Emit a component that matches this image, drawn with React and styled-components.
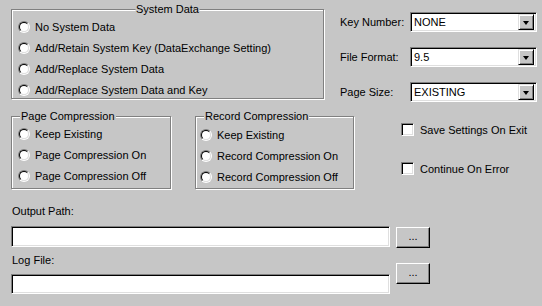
import styled, { createGlobalStyle } from "styled-components"

const Global = createGlobalStyle`
  html, body { margin: 0; padding: 0; background: #c6c6c6; }
  * { box-sizing: border-box; }
`

const Window = styled.div`
  width: 542px;
  height: 306px;
  background: #c6c6c6;
  font-family: "Liberation Sans", Arial, sans-serif;
  font-size: 11px;
  color: #000;
  padding: 9px 0 0 11px;
  display: flex;
  flex-direction: column;
`

const TopRow = styled.div`
  display: flex;
  align-items: flex-start;
`

const MidRow = styled.div`
  display: flex;
  align-items: flex-start;
  margin-top: 14px;
`

const Group = styled.div`
  position: relative;
  width: ${p => p.$w}px;
  height: ${p => p.$h}px;
  margin-left: ${p => p.$ml || 0}px;
  border: 1px solid #808080;
  box-shadow: inset 1px 1px 0 #fff, 1px 1px 0 #fff;
  padding: ${p => p.$pt}px 0 0 ${p => p.$pl}px;
  flex-shrink: 0;
`

const Legend = styled.span`
  position: absolute;
  top: -7px;
  ${p => (p.$center ? "left: 50%; transform: translateX(-50%);" : `left: ${p.$left}px;`)}
  background: #c6c6c6;
  padding: 0 1px;
  line-height: 13px;
  white-space: nowrap;
`

const RadioRow = styled.label`
  display: flex;
  align-items: center;
  height: ${p => p.$h}px;
  gap: 5px;
  white-space: nowrap;
`

const RadioOuter = styled.span`
  width: 12px;
  height: 12px;
  border-radius: 50%;
  border: 1px solid;
  border-color: #808080 #fff #fff #808080;
  flex-shrink: 0;
`

const RadioInner = styled.span`
  display: block;
  width: 10px;
  height: 10px;
  border-radius: 50%;
  border: 1px solid;
  border-color: #000 #dfdfdf #dfdfdf #000;
  background: #fff;
`

const Radio = ({ children, h = 21 }) => (
  <RadioRow $h={h}>
    <RadioOuter>
      <RadioInner />
    </RadioOuter>
    <span>{children}</span>
  </RadioRow>
)

const Fields = styled.div`
  margin-left: 16px;
  margin-top: 3px;
  display: flex;
  flex-direction: column;
  gap: 15px;
`

const FieldRow = styled.div`
  display: flex;
  align-items: center;
  height: 20px;
`

const FieldLabel = styled.span`
  width: 70px;
`

const Sunken = styled.div`
  background: #fff;
  border: 1px solid;
  border-color: #808080 #fff #fff #808080;
  box-shadow: inset 1px 1px 0 #000, inset -1px -1px 0 #dfdfdf;
`

const Select = styled(Sunken)`
  width: 127px;
  height: 20px;
  display: flex;
  align-items: center;
  justify-content: space-between;
  padding: 2px 2px 2px 3px;
`

const SelectText = styled.span`
  line-height: 16px;
`

const DropButton = styled.span`
  width: 16px;
  height: 16px;
  background: #c6c6c6;
  border: 1px solid;
  border-color: #dfdfdf #000 #000 #dfdfdf;
  box-shadow: inset 1px 1px 0 #fff, inset -1px -1px 0 #808080;
  display: flex;
  align-items: center;
  justify-content: center;
`

const Arrow = styled.span`
  width: 0;
  height: 0;
  border-left: 3.5px solid transparent;
  border-right: 3.5px solid transparent;
  border-top: 4px solid #000;
  margin-top: 1px;
`

const Combo = ({ label, value }) => (
  <FieldRow>
    <FieldLabel>{label}</FieldLabel>
    <Select>
      <SelectText>{value}</SelectText>
      <DropButton>
        <Arrow />
      </DropButton>
    </Select>
  </FieldRow>
)

const Checks = styled.div`
  margin-left: 47px;
  margin-top: 7px;
  display: flex;
  flex-direction: column;
  gap: 26px;
`

const CheckRow = styled.label`
  display: flex;
  align-items: center;
  gap: 6px;
  height: 13px;
`

const CheckBox = styled(Sunken)`
  width: 13px;
  height: 13px;
`

const PathArea = styled.div`
  display: grid;
  grid-template-columns: 379px 34px;
  column-gap: 6px;
  margin-top: 16px;
`

const PathLabel = styled.div`
  grid-column: 1;
  height: ${p => p.$h}px;
  padding-top: ${p => p.$pt || 0}px;
  line-height: 13px;
  padding-left: 1px;
`

const PathInput = styled(Sunken)`
  grid-column: 1;
  height: ${p => p.$h}px;
`

const Browse = styled.button`
  grid-column: 2;
  grid-row: ${p => p.$row};
  align-self: end;
  margin-bottom: ${p => p.$lift}px;
  width: 34px;
  height: 21px;
  padding: 0 0 3px;
  font: inherit;
  color: #000;
  background: #c6c6c6;
  border: 1px solid;
  border-color: #fff #000 #000 #fff;
  box-shadow: inset -1px -1px 0 #808080;
`

export default function App() {
  return (
    <Window>
      <Global />
      <TopRow>
        <Group $w={313} $h={90} $pt={6} $pl={6}>
          <Legend $center>System Data</Legend>
          <Radio>No System Data</Radio>
          <Radio>Add/Retain System Key (DataExchange Setting)</Radio>
          <Radio>Add/Replace System Data</Radio>
          <Radio>Add/Replace System Data and Key</Radio>
        </Group>
        <Fields>
          <Combo label="Key Number:" value="NONE" />
          <Combo label="File Format:" value="9.5" />
          <Combo label="Page Size:" value="EXISTING" />
        </Fields>
      </TopRow>
      <MidRow>
        <Group $w={160} $h={73} $pt={6} $pl={6}>
          <Legend $left={8}>Page Compression</Legend>
          <Radio>Keep Existing</Radio>
          <Radio>Page Compression On</Radio>
          <Radio>Page Compression Off</Radio>
        </Group>
        <Group $w={159} $h={73} $pt={7} $pl={4} $ml={24}>
          <Legend $left={8}>Record Compression</Legend>
          <Radio>Keep Existing</Radio>
          <Radio>Record Compression On</Radio>
          <Radio>Record Compression Off</Radio>
        </Group>
        <Checks>
          <CheckRow>
            <CheckBox />
            <span>Save Settings On Exit</span>
          </CheckRow>
          <CheckRow>
            <CheckBox />
            <span>Continue On Error</span>
          </CheckRow>
        </Checks>
      </MidRow>
      <PathArea>
        <PathLabel $h={21}>Output Path:</PathLabel>
        <PathInput $h={21} />
        <Browse $row="2" $lift={-1}>...</Browse>
        <PathLabel $h={27} $pt={7}>Log File:</PathLabel>
        <PathInput $h={20} />
        <Browse $row="3 / 5" $lift={10}>...</Browse>
      </PathArea>
    </Window>
  )
}
